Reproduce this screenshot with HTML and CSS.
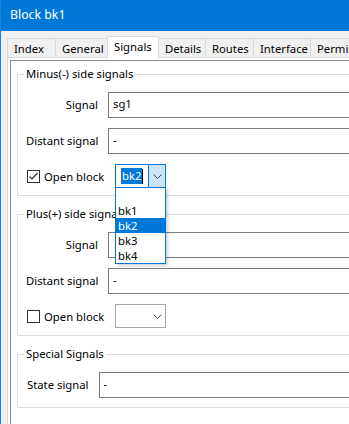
FILE: index.html
```html
<!DOCTYPE html>
<html lang="en">
<head>
  <meta charset="UTF-8">
  <title>Block bk1</title>
  <link rel="stylesheet" href="styles.css">
</head>
<body>
  <div class="window">
    <div class="titlebar">Block bk1</div>
    <div class="client">
      <div class="tabs">
        <div class="tab t-index">Index</div>
        <div class="tab t-general">General</div>
        <div class="tab t-signals active">Signals</div>
        <div class="tab t-details">Details</div>
        <div class="tab t-routes">Routes</div>
        <div class="tab t-iface">Interface</div>
        <div class="tab t-perm">Permissions</div>
      </div>
      <div class="tabpage">
        <div class="scroller">

          <fieldset class="group">
            <legend>Minus(-) side signals</legend>
            <div class="rows">
              <label class="lbl">Signal</label>
              <div class="input">sg1</div>
              <label class="lbl">Distant signal</label>
              <div class="input">-</div>
              <div class="open-row">
                <div class="check-label">
                  <svg class="check" width="13" height="13" viewBox="0 0 13 13">
                    <rect x="0.5" y="0.5" width="12" height="12" fill="#fff" stroke="#333"/>
                    <polyline points="2.5,6.5 5,9 10.5,3" fill="none" stroke="#333" stroke-width="1.2"/>
                  </svg>
                  <span>Open block</span>
                </div>
                <div class="combo focused">
                  <div class="combo-text"><span class="sel">bk2</span><span class="caret"></span></div>
                  <div class="combo-btn">
                    <svg width="9" height="5" viewBox="0 0 9 5"><polyline points="0.5,0.5 4.5,4.5 8.5,0.5" fill="none" stroke="#444"/></svg>
                  </div>
                  <ul class="droplist">
                    <li>&nbsp;</li>
                    <li>bk1</li>
                    <li class="hi">bk2</li>
                    <li>bk3</li>
                    <li>bk4</li>
                  </ul>
                </div>
              </div>
            </div>
          </fieldset>

          <fieldset class="group">
            <legend>Plus(+) side signals</legend>
            <div class="rows">
              <label class="lbl">Signal</label>
              <div class="input"></div>
              <label class="lbl">Distant signal</label>
              <div class="input">-</div>
              <div class="open-row">
                <div class="check-label">
                  <svg class="check" width="13" height="13" viewBox="0 0 13 13">
                    <rect x="0.5" y="0.5" width="12" height="12" fill="#fff" stroke="#333"/>
                  </svg>
                  <span>Open block</span>
                </div>
                <div class="combo">
                  <div class="combo-text"></div>
                  <div class="combo-btn">
                    <svg width="9" height="5" viewBox="0 0 9 5"><polyline points="0.5,0.5 4.5,4.5 8.5,0.5" fill="none" stroke="#606060"/></svg>
                  </div>
                </div>
              </div>
            </div>
          </fieldset>

          <fieldset class="group">
            <legend>Special Signals</legend>
            <div class="rows special">
              <label class="lbl">State signal</label>
              <div class="input">-</div>
            </div>
          </fieldset>

        </div>
      </div>
    </div>
  </div>
</body>
</html>
```

FILE: styles.css
```css
html,body{  margin:0; padding:0; }
body{
  width:349px; height:424px; overflow:hidden; background:#f0f0f0;
  font-family:"Noto Sans", sans-serif; font-size:11.3px; color:#000;
}
.window{
  width:470px; height:424px; display:flex; flex-direction:column;
  border-left:1px solid #1a7fd9;
}
.titlebar{
  height:31px; flex:none; background:#0078d7; color:#fff;
  padding-left:9px; line-height:30px; font-size:12.3px;
}
.client{  flex:1; display:flex; flex-direction:column; background:#f0f0f0; }

/* tabs */
.tabs{  height:26px; flex:none; display:flex; align-items:flex-end; margin-left:6px; }
.tab{
  height:19px; box-sizing:border-box; border:1px solid #d9d9d9; border-bottom:0;
  margin-left:-1px; padding:2px 0 0 6px; line-height:16px; white-space:nowrap; overflow:hidden;
  background:#f0f0f0;
}
.tab:first-child{  margin-left:0; }
.tab.active{
  height:22px; margin-bottom:-1px; background:#fff; padding-top:2px;
  position:relative; z-index:1;
}
.t-index{  width:49px; }
.t-general{  width:53px; }
.t-signals{  width:52px; }
.t-details{  width:48px; }
.t-routes{  width:49px; }
.t-iface{  width:58px; }
.t-perm{  width:70px; }

.tabpage{
  flex:1; margin-left:6px; background:#fff;
  border-left:1px solid #d9d9d9; border-top:1px solid #d9d9d9;
  padding:2px 0 0 2px;
}
.scroller{
  height:100%; box-sizing:border-box; padding-left:6px;
  border-left:1px solid #8c8c8c; border-top:1px solid #8c8c8c;
}

/* group boxes */
.group{
  margin:5px 0 0; padding:0; min-width:0; border:1px solid #dcdcdc;
}
.group + .group{  margin-top:10px; }
.group>legend{  margin-left:6px; padding:0 2px; line-height:16px; }
.rows{
  display:grid; grid-template-columns:72px 1fr; column-gap:10px; row-gap:10px;
  padding:10px 0 7px 8px;
}
.rows.special{  grid-template-columns:auto 1fr; padding:10px 0 9px 9px; }
.lbl{  text-align:right; align-self:center; line-height:16px; white-space:nowrap; }
.input{
  height:26px; box-sizing:border-box; border:1px solid #7a7a7a;
  padding-left:4px; line-height:22px; background:#fff;
}

/* open block row */
.open-row{  grid-column:1 / -1; display:flex; align-items:center; }
.check-label{  width:89px; display:flex; align-items:center; gap:4px; padding-left:1px; box-sizing:border-box; }
.check{  display:block; flex:none; }

.combo{
  width:51px; height:24px; box-sizing:border-box; border:1px solid #a8a8a8;
  display:flex; background:#fff; position:relative;
}
.combo.focused{  border-color:#0078d7; }
.combo-text{  flex:1; display:flex; align-items:center; padding-left:5px; }
.sel{  background:#0078d7; color:#fff; line-height:16px; padding:0 1px; }
.caret{  width:1px; height:15px; background:#000; }
.combo-btn{  width:16px; display:flex; align-items:center; justify-content:center; }
.combo.focused .combo-btn{  background:#cce4f7; border-left:1px solid #0078d7; }

.droplist{
  position:absolute; left:-1px; top:22px; width:51px; box-sizing:border-box;
  margin:0; padding:0; list-style:none; background:#fff;
  border:1px solid #0078d7; box-shadow:2px 2px 3px rgba(0,0,0,0.18); z-index:5;
}
.droplist>li{  height:15px; line-height:15px; padding-left:2px; }
.droplist>li.hi{  background:#0078d7; color:#fff; }
```
